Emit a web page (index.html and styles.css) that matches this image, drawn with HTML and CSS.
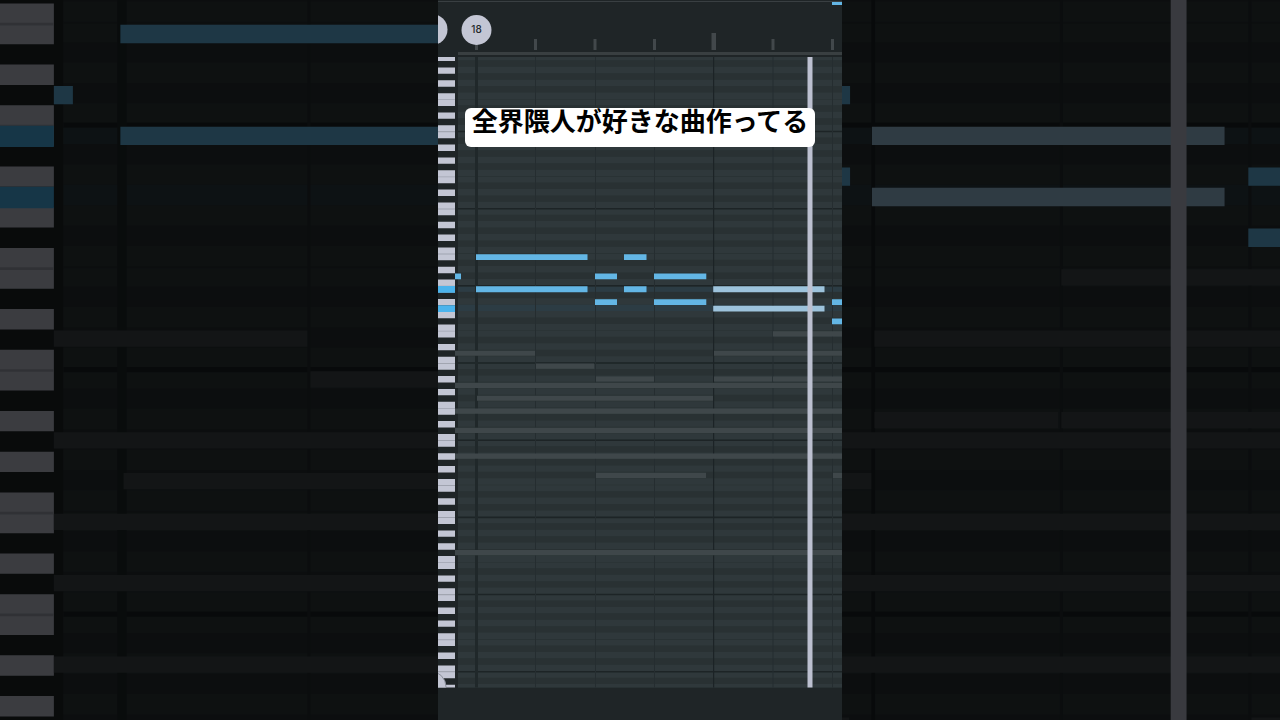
FILE: index.html
```html
<!DOCTYPE html>
<html lang="ja">
<head>
    <meta charset="UTF-8">
    <meta name="viewport" content="width=device-width, initial-scale=1.0">
    <title>全界隈人が好きな曲作ってる</title>
    <link rel="stylesheet" href="styles.css">
</head>
<body>
    <!-- Shared shapes -->
    <svg class="defs" aria-hidden="true">
        <defs>
            <!-- One octave, B at the top to C at the bottom, 1 unit = 1 row -->
            <g id="octave">
                <path class="row-white" d="M20 0h384v1h-384zM20 2h384v1h-384zM20 4h384v1h-384zM20 6h384v2h-384zM20 9h384v1h-384zM20 11h384v1h-384z"/>
                <path class="row-line" d="M20 -.05h384v.25h-384z"/>
                <path class="row-edge" d="M20 7h384v.1h-384z"/>
                <path class="key" d="M0 .1h17v1h-17zM0 2.1h17v1h-17zM0 4.1h17v1h-17zM0 6.1h17v2h-17zM0 9.1h17v1h-17zM0 11.1h17v1h-17z"/>
                <path class="key-edge" d="M0 .05h17v.13h-17zM0 7.05h17v.13h-17z"/>
            </g>
            <clipPath id="roll-clip"><rect x="0" y="57" width="404" height="630.5"/></clipPath>

            <g id="roll" clip-path="url(#roll-clip)">
                <rect class="panel" x="0" y="57" width="404" height="631"/>
                <rect class="row-black" x="20" y="57" width="384" height="631"/>
                <g transform="translate(0 285.4) scale(1 6.43)">
                    <use href="#octave" y="-36"/>
                    <use href="#octave" y="-24"/>
                    <use href="#octave" y="-12"/>
                    <use href="#octave" y="0"/>
                    <use href="#octave" y="12"/>
                    <use href="#octave" y="24"/>
                    <use href="#octave" y="36"/>
                    <use href="#octave" y="48"/>
                    <use href="#octave" y="60"/>
                    <path class="row-active" d="M20 .2h384v.8h-384zM20 3h384v1h-384z"/>
                    <path class="key-active" d="M0 .1h17v1.05h-17zM0 3.1h17v1.05h-17z"/>
                </g>

                <!-- Beats -->
                <path class="bar" d="M37 57h3v631h-3z"/>
                <path class="beat" d="M97 57h1v631h-1zM157 57h1v631h-1zM216 57h1v631h-1zM334.500 57h1v631h-1zM394 57h1v631h-1z"/>
                <path class="half" d="M275 57h1.200v631h-1.200z"/>

                <g transform="translate(0 285.4) scale(1 6.43)">
                    <!-- Notes of the other channels -->
                    <path class="ghost" d="M335 7.15h69v.8h-69zM17 10.15h80v.8h-80zM276 10.15h128v.8h-128zM98 12.15h58v.8h-58zM158 14.15h58v.8h-58zM276 14.15h58v.8h-58zM335 14.15h69v.8h-69z"/>
                    <path class="ghost" d="M17 15.15h387v.8h-387zM39 17.15h236v.8h-236zM17 19.15h387v.8h-387zM17 22.15h387v.8h-387zM17 26.15h387v.8h-387zM158 29.15h110v.8h-110zM395 29.15h9v.8h-9zM17 41.15h387v.8h-387z"/>
                    <!-- Notes of this channel -->
                    <path class="note" d="M38 -4.85h111.500v.9h-111.500zM186 -4.85h22.500v.9h-22.500zM17 -1.85h6v.9h-6zM157 -1.85h22v.9h-22zM216 -1.85h52.300v.9h-52.300z"/>
                    <path class="note" d="M38 .15h111.500v.9h-111.500zM186 .15h22.500v.9h-22.500zM157 2.15h22v.9h-22zM216 2.15h52.300v.9h-52.300zM394 2.15h10v.9h-10zM394 5.15h10v.9h-10z"/>
                    <path class="note-playing" d="M275.200 .15h111.300v.9h-111.300zM275.200 3.15h111.300v.9h-111.300z"/>
                </g>

                <circle class="handle" cx="-8" cy="687" r="16"/>
                <rect class="playhead" x="369.500" y="57" width="5" height="631"/>
            </g>
        </defs>
    </svg>

    <svg class="backdrop" viewBox="0 0 404 720" preserveAspectRatio="xMidYMid slice" aria-hidden="true">
        <use href="#roll"/>
    </svg>

    <main class="video">
        <svg class="frame" viewBox="0 0 404 720" role="img" aria-label="Piano roll">
            <rect class="panel" width="404" height="720"/>
            <rect class="ruler-line" y="1" width="404" height="1"/>
            <rect class="note" x="394" y="2" width="10" height="3"/>
            <path class="tick" d="M37 39h3v11h-3zM96 39h3v11h-3zM155.500 39h3v11h-3zM215 39h3v11h-3zM273.500 33h4.500v17h-4.500zM333.500 39h3v11h-3zM393 39h3v11h-3z"/>
            <rect class="ruler-edge" x="20" y="52" width="384" height="3"/>
            <circle class="marker" cx="-6" cy="29.5" r="15.500"/>
            <circle class="marker" cx="38.500" cy="30" r="15"/>
            <text class="marker-text" x="38.500" y="33">18</text>
            <use href="#roll"/>
        </svg>
        <div class="caption">
            <h1 class="caption-text">全界隈人が好きな曲作ってる</h1>
        </div>
    </main>
</body>
</html>
```
FILE: styles.css
```css
* {
    box-sizing: border-box;
}
body {
    margin: 0;
    height: 100vh;
    overflow: hidden;
    position: relative;
    background-color: #000;
    font-family: "Liberation Sans", "Noto Sans CJK JP", sans-serif;
}
.defs {
    position: absolute;
    width: 0;
    height: 0;
}
.backdrop {
    position: absolute;
    inset: 0;
    width: 100%;
    height: 100%;
    opacity: 0.3;
}
.video {
    position: relative;
    height: 100%;
    aspect-ratio: 404 / 720;
    margin: 0 auto;
}
.frame {
    display: block;
    width: 100%;
    height: 100%;
}

/* Caption over the video */
.caption {
    position: absolute;
    top: 15%;
    left: 0;
    right: 0;
    display: flex;
    justify-content: center;
}
.caption-text {
    margin: 0;
    padding: 0 7px 15px;
    border-radius: 6px;
    background-color: #fff;
    color: #000;
    font-family: "Noto Sans CJK JP", sans-serif;
    font-size: 26px;
    font-weight: 700;
    line-height: 24px;
    white-space: nowrap;
}

/* Piano roll */
.panel {
    fill: #1f2527;
}
.row-black {
    fill: #293133;
}
.row-white {
    fill: #2f383b;
}
.row-line {
    fill: #1d2426;
}
.row-edge {
    fill: #283033;
}
.row-active {
    fill: #2c3c44;
}
.key {
    fill: #c3c6d4;
}
.key-edge {
    fill: #a0a4b0;
}
.key-active {
    fill: #4bb3ec;
}
.bar {
    fill: #20282a;
}
.beat {
    fill: #252d30;
}
.half {
    fill: #1c2326;
}
.ghost {
    fill: #3f474a;
}
.note {
    fill: #63b6e5;
}
.note-playing {
    fill: #9dc3dc;
}
.playhead {
    fill: #bcc0d0;
}
.handle {
    fill: #c3c6d4;
    stroke: #8b8f9b;
    stroke-width: 1;
}

/* Ruler */
.ruler-line {
    fill: #393f42;
}
.ruler-edge {
    fill: #393f41;
}
.tick {
    fill: #42484b;
}
.marker {
    fill: #c3c6d4;
}
.marker-text {
    fill: #24282b;
    font-family: Inter, sans-serif;
    font-size: 10px;
    font-weight: 500;
    text-anchor: middle;
}
```
